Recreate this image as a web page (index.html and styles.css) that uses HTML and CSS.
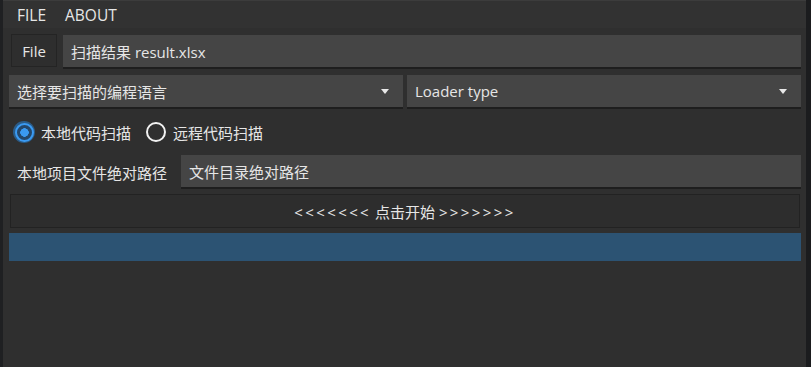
FILE: index.html
```html
<!DOCTYPE html>
<html lang="zh-CN">
<head>
    <meta charset="UTF-8">
    <title>代码扫描</title>
    <link rel="stylesheet" href="styles.css">
</head>
<body>
    <div class="window">
        <div class="menubar">
            <span>FILE</span>
            <span>ABOUT</span>
        </div>

        <div class="content">
            <div class="row">
                <button class="file-btn">File</button>
                <div class="field">扫描结果 result.xlsx</div>
            </div>

            <div class="row combo-row">
                <div class="combo">
                    <span>选择要扫描的编程语言</span>
                    <i class="arrow"></i>
                </div>
                <div class="combo">
                    <span>Loader type</span>
                    <i class="arrow"></i>
                </div>
            </div>

            <div class="radio-row">
                <label class="radio checked"><span class="dot"></span>本地代码扫描</label>
                <label class="radio"><span class="dot"></span>远程代码扫描</label>
            </div>

            <div class="row path-row">
                <span class="path-label">本地项目文件绝对路径</span>
                <div class="field">文件目录绝对路径</div>
            </div>

            <button class="start-btn"><span class="chevrons">&lt;&lt;&lt;&lt;&lt;&lt;&lt;</span> 点击开始 <span class="chevrons">&gt;&gt;&gt;&gt;&gt;&gt;&gt;</span></button>

            <div class="progress"></div>
        </div>
    </div>
</body>
</html>
```

FILE: styles.css
```css
:root {
    --bg-color: #2f2f2f;
    --field-color: #454545;
    --text-color: #e6e6e6;
    --accent-color: #3a9af2;
}

* {
    margin: 0;
    padding: 0;
    box-sizing: border-box;
}

body {
    font-family: "Open Sans", "Noto Sans CJK SC", sans-serif;
    font-size: 15px;
    color: var(--text-color);
    background-color: #1b1c1e;
}

.window {
    width: 811px;
    height: 367px;
    background-color: var(--bg-color);
    border-left: 3px solid #1f2022;
    border-right: 5px solid #1b1c1e;
}

.menubar {
    height: 28px;
    display: flex;
    align-items: center;
    gap: 19px;
    padding-left: 14px;
    background-color: #323232;
    border-top: 1px solid #3c3c3c;
    font-size: 15.5px;
}

.content {
    padding: 6px 5px 0 6px;
}

.row {
    display: flex;
    align-items: flex-start;
}

.file-btn {
    width: 46px;
    height: 33px;
    margin-left: 2px;
    margin-right: 6px;
    background-color: #2e2e2e;
    border: 1px solid #242424;
    color: var(--text-color);
    font: inherit;
}

.field {
    flex: 1;
    height: 34px;
    margin-top: 1px;
    padding-left: 8px;
    display: flex;
    align-items: center;
    background-color: var(--field-color);
    border-bottom: 2px solid #1e1e1e;
}

.combo-row {
    margin-top: 6px;
    gap: 4px;
}

.combo {
    flex: 1;
    height: 34px;
    padding: 0 14px 0 8px;
    display: flex;
    align-items: center;
    justify-content: space-between;
    background-color: var(--field-color);
    border-bottom: 2px solid #1e1e1e;
}

.arrow {
    width: 0;
    height: 0;
    border-left: 4px solid transparent;
    border-right: 4px solid transparent;
    border-top: 5px solid #e8e8e8;
}

.radio-row {
    height: 46px;
    display: flex;
    align-items: center;
    gap: 14px;
    padding-left: 4px;
}

.radio {
    display: flex;
    align-items: center;
    gap: 6px;
}

.radio .dot {
    width: 22px;
    height: 22px;
    border-radius: 50%;
    display: flex;
    align-items: center;
    justify-content: center;
}

.radio .dot::before {
    content: "";
    width: 16px;
    height: 16px;
    border-radius: 50%;
    border: 2px solid #f2f2f2;
}

.radio.checked .dot {
    background-color: #2b5c88;
}

.radio.checked .dot::before {
    width: 15px;
    height: 15px;
    border-color: var(--accent-color);
    background: radial-gradient(circle, var(--accent-color) 0 4px, #24476a 4.5px);
}

.path-row {
    align-items: center;
}

.path-label {
    width: 172px;
    padding-left: 8px;
}

.path-row .field {
    margin-top: 0;
}

.start-btn {
    display: block;
    width: calc(100% - 2px);
    height: 34px;
    margin: 5px 1px 0;
    background-color: #2d2d2d;
    border: 1px solid #222;
    color: var(--text-color);
    font: inherit;
}

.chevrons {
    letter-spacing: 2.4px;
}

.progress {
    height: 28px;
    margin-top: 5px;
    background-color: #2c5373;
}
```
